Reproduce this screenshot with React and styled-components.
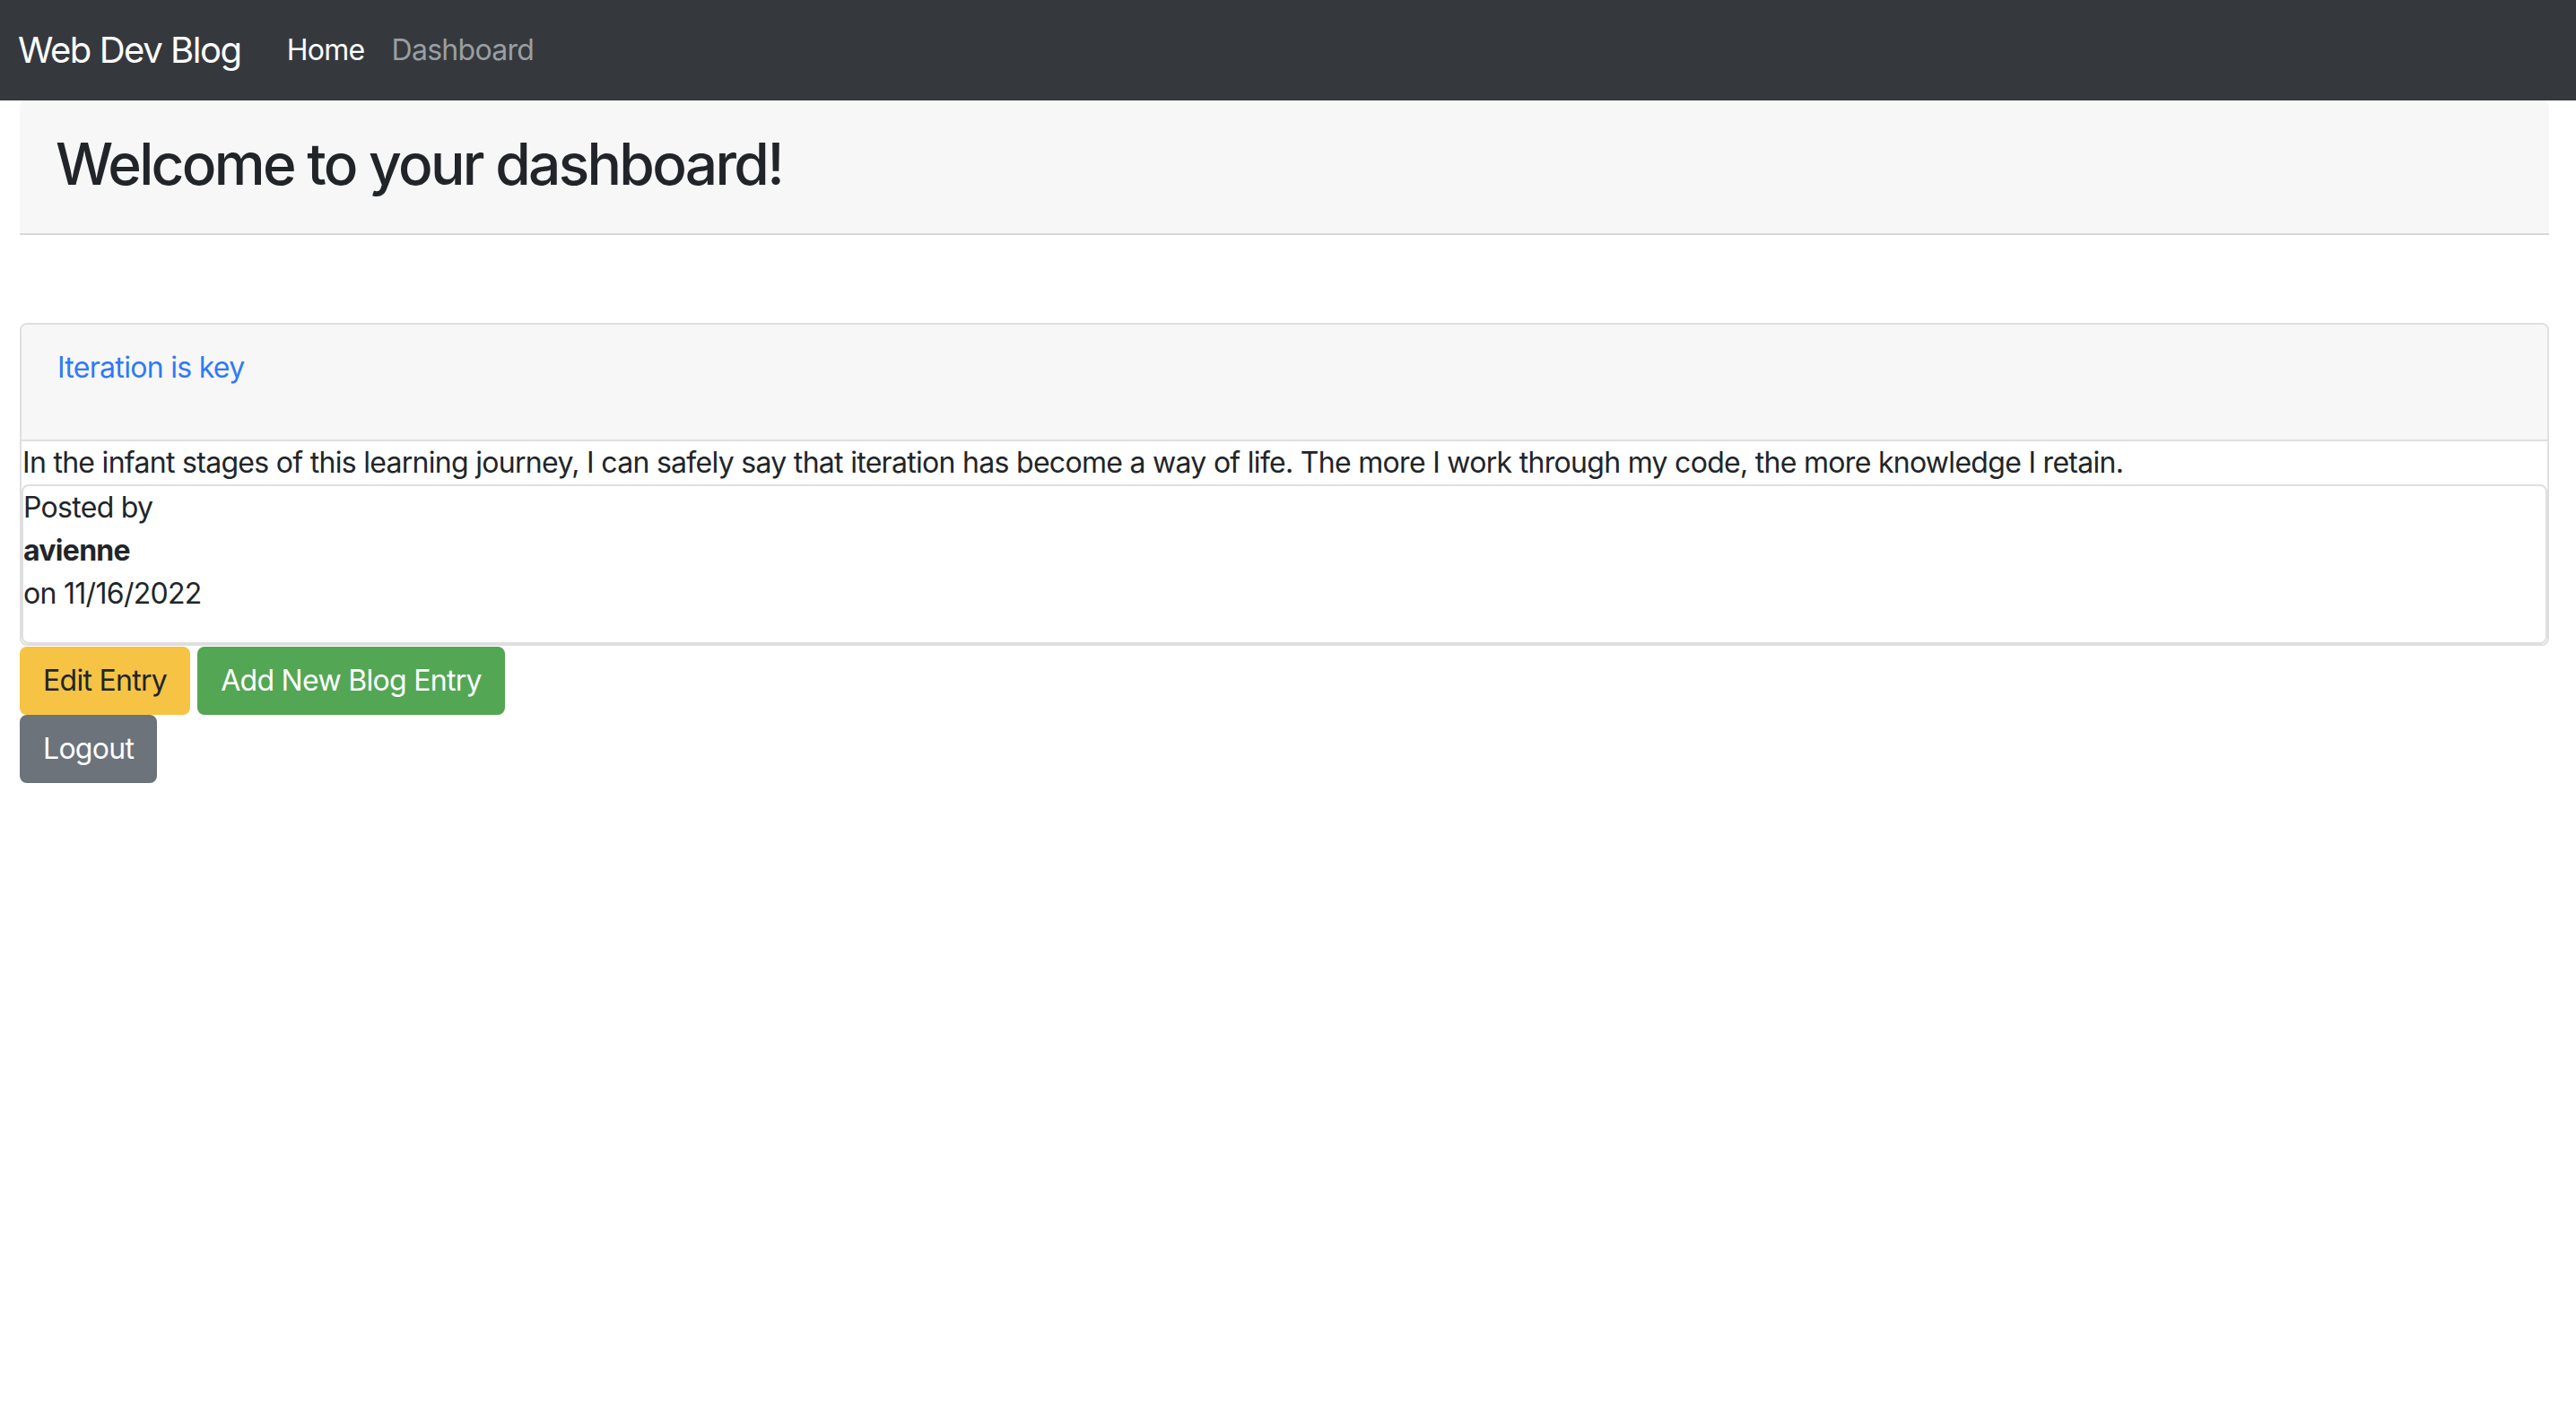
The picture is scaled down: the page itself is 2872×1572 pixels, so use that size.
import styled, { createGlobalStyle } from "styled-components";

const GlobalStyle = createGlobalStyle`
  * { box-sizing: border-box; }
  body {
    margin: 0;
    background: #ffffff;
    color: #212529;
    font-family: Inter, "Noto Sans", sans-serif;
    font-size: 32px;
    line-height: 1.5;
    letter-spacing: -0.022em;
  }
`;

const NavBar = styled.nav`
  height: 112px;
  background-color: #35393e;
  display: flex;
  align-items: center;
  padding: 0 20px;
`;

const Brand = styled.a`
  font-size: 40px;
  letter-spacing: -0.036em;
  color: #ffffff;
  text-decoration: none;
  margin-right: 51px;
  line-height: 60px;
`;

const NavLinks = styled.div`
  display: flex;
  gap: 30px;
`;

const NavLink = styled.a`
  font-size: 32px;
  color: ${(props) => (props.active ? "#ffffff" : "#9b9ea1")};
  text-decoration: none;
`;

const Main = styled.main`
  padding: 0 30px 0 22px;
`;

const Jumbotron = styled.header`
  background-color: #f7f7f7;
  border-bottom: 2px solid #d7d7d7;
  border-radius: 8px 8px 0 0;
  padding: 33px 40px 22px;

  h2 {
    margin: 0 0 16px;
    font-size: 64px;
    font-weight: 500;
    letter-spacing: -0.042em;
    line-height: 1.2;
  }
`;

const Card = styled.section`
  margin-top: 98px;
  border: 2px solid #dfdfdf;
  border-radius: 8px;
  overflow: hidden;
`;

const CardHeader = styled.div`
  background-color: #f7f7f7;
  border-bottom: 2px solid #dfdfdf;
  padding: 24px 40px;

  p {
    margin: 0 0 32px;
  }

  a {
    color: #2f7af6;
    text-decoration: none;
  }
`;

const CardText = styled.div`
  padding-left: 1px;
`;

const Footer = styled.div`
  border: 2px solid #dfdfdf;
  border-radius: 8px;

  p {
    margin: 0 0 30px;
  }
`;

const Actions = styled.div`
  margin-top: 1px;
  display: flex;
  flex-direction: column;
  align-items: flex-start;
`;

const ButtonRow = styled.div`
  display: flex;
  gap: 8px;
`;

const Button = styled.button`
  font-family: inherit;
  font-size: 32px;
  letter-spacing: -0.022em;
  line-height: 48px;
  padding: 12px 24px;
  border: 2px solid ${(props) => props.bg};
  border-radius: 8px;
  background-color: ${(props) => props.bg};
  color: ${(props) => props.fg};
  cursor: pointer;
`;

export default function App() {
  return (
    <>
      <GlobalStyle />
      <NavBar>
        <Brand href="#">Web Dev Blog</Brand>
        <NavLinks>
          <NavLink href="#" active>
            Home
          </NavLink>
          <NavLink href="#">Dashboard</NavLink>
        </NavLinks>
      </NavBar>
      <Main>
        <Jumbotron>
          <h2>Welcome to your dashboard!</h2>
        </Jumbotron>
        <Card>
          <CardHeader>
            <p>
              <a href="#">Iteration is key</a>
            </p>
          </CardHeader>
          <CardText>
            In the infant stages of this learning journey, I can safely say that
            iteration has become a way of life. The more I work through my code,
            the more knowledge I retain.
          </CardText>
          <Footer>
            <div>Posted by</div>
            <div>
              <strong>avienne</strong>
            </div>
            <p>on 11/16/2022</p>
          </Footer>
        </Card>
        <Actions>
          <ButtonRow>
            <Button bg="#f6c344" fg="#212529">
              Edit Entry
            </Button>
            <Button bg="#53a653" fg="#ffffff">
              Add New Blog Entry
            </Button>
          </ButtonRow>
          <Button bg="#6c737a" fg="#ffffff">
            Logout
          </Button>
        </Actions>
      </Main>
    </>
  );
}
